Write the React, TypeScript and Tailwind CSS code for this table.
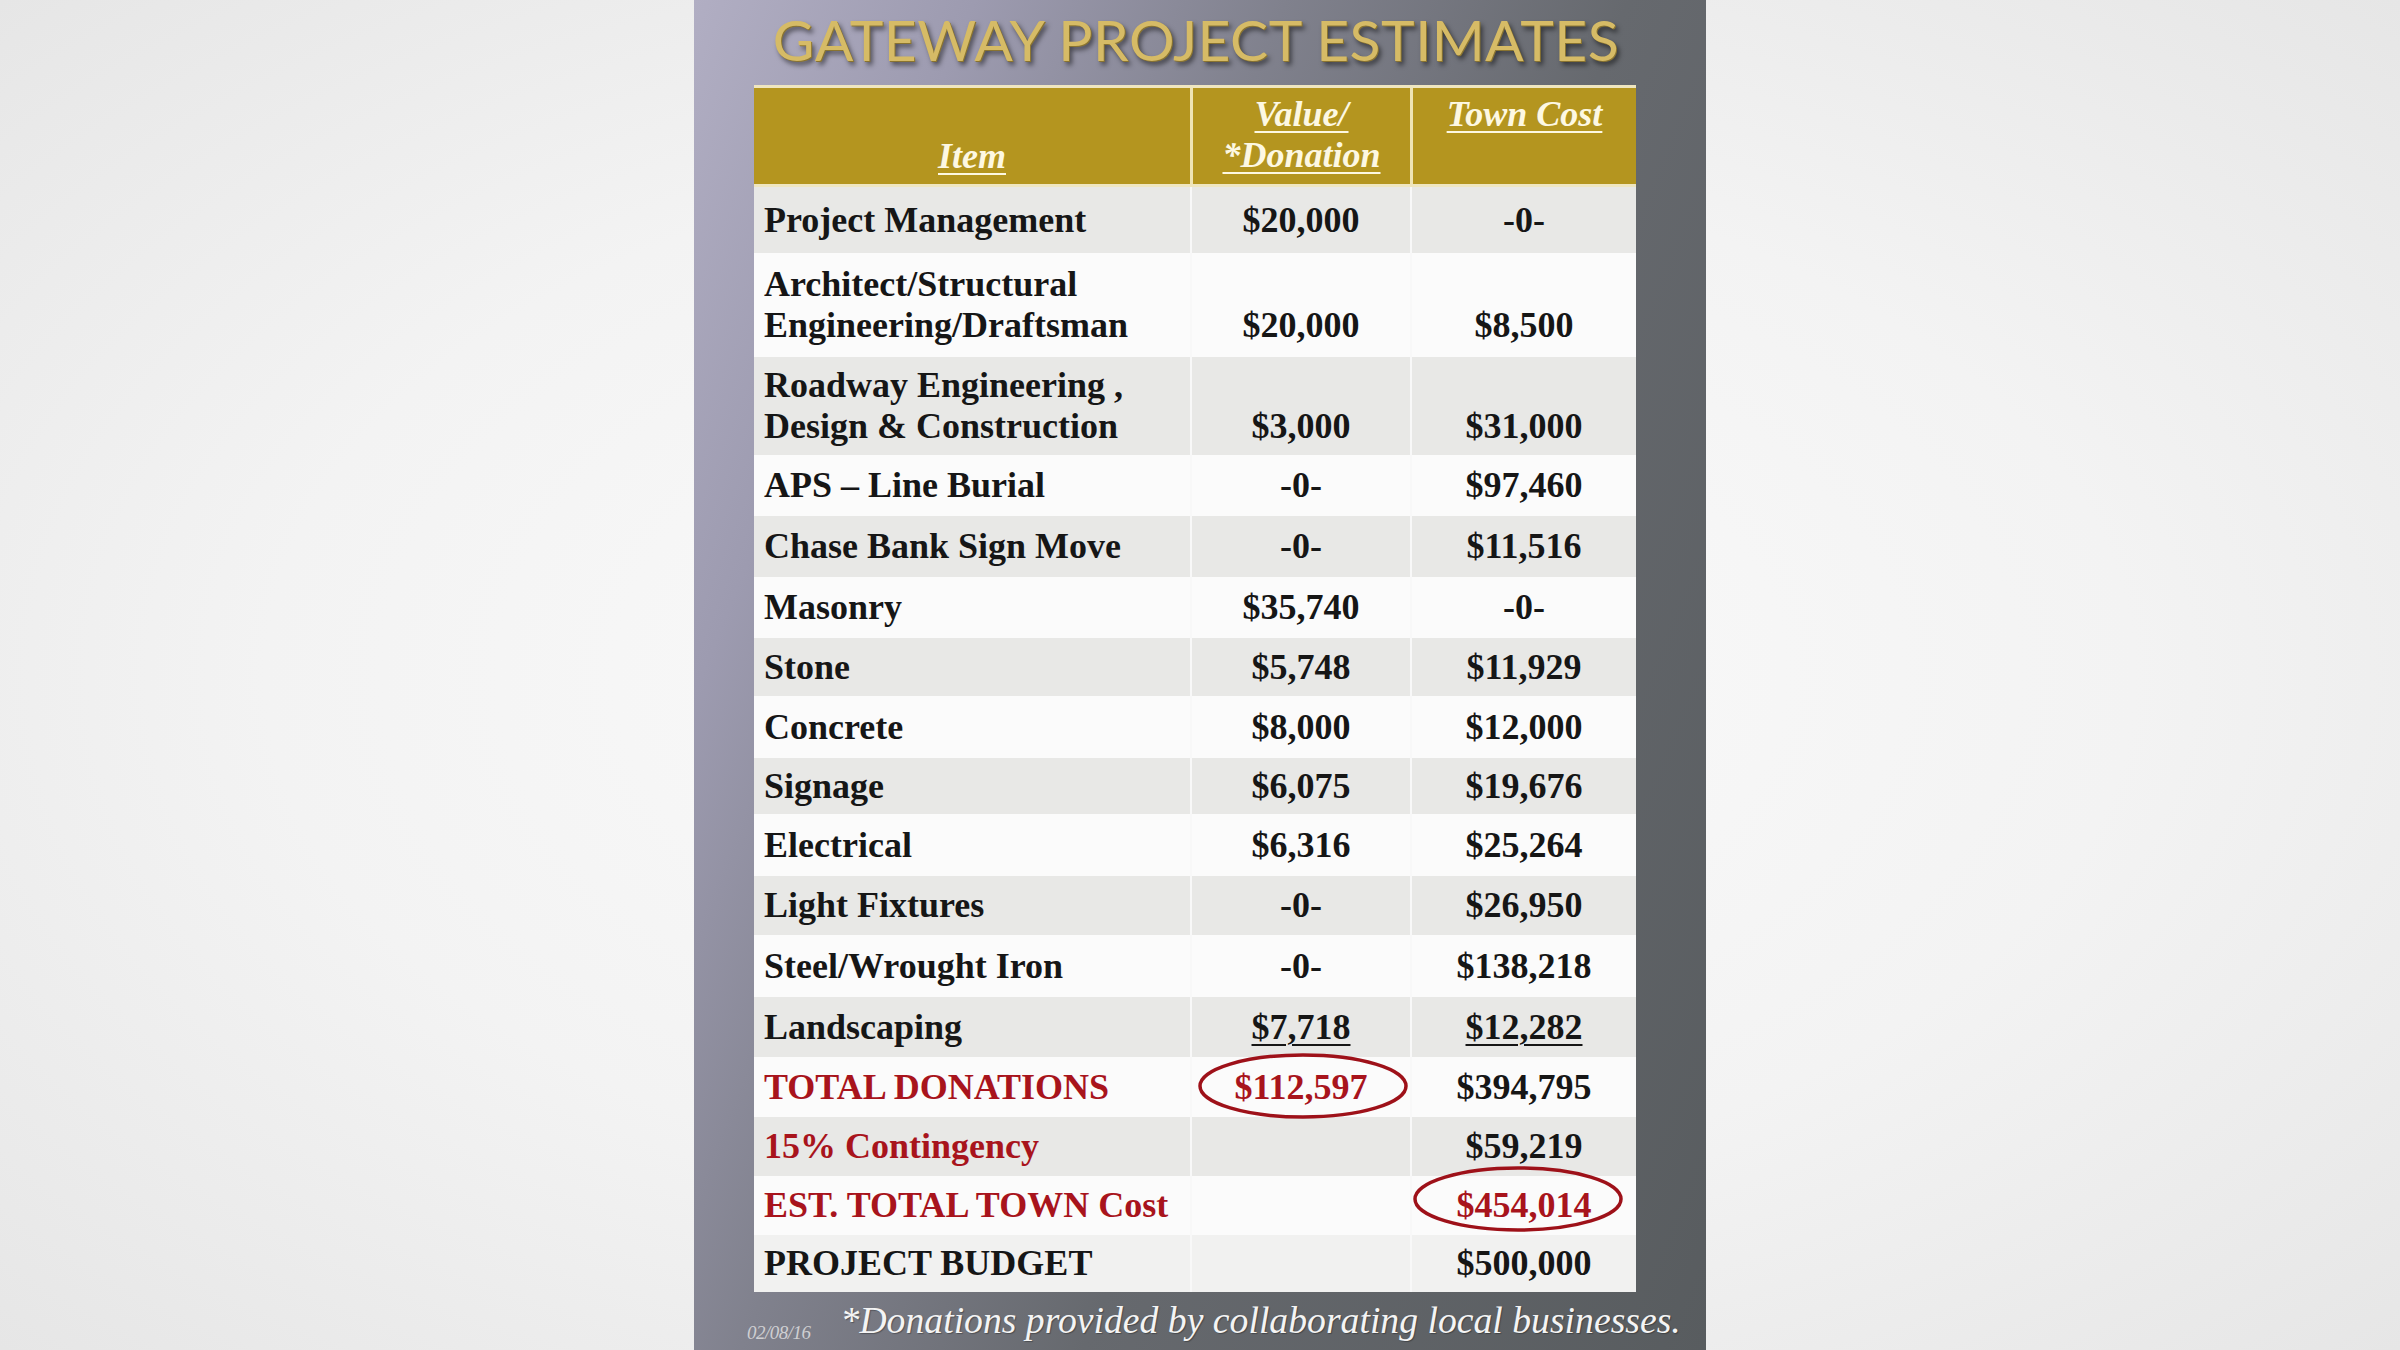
import React from "react";

type Row = {
  item: string[];
  v: string;
  t: string;
  h: string;
  bg: string;
  red?: boolean;
  vRed?: boolean;
  tRed?: boolean;
  vCircle?: boolean;
  tCircle?: boolean;
  underline?: boolean;
};

const rows: Row[] = [
  { item: ["Project Management"], v: "$20,000", t: "-0-", h: "h-[66px]", bg: "bg-[#e8e8e6]" },
  { item: ["Architect/Structural", "Engineering/Draftsman"], v: "$20,000", t: "$8,500", h: "h-[104px]", bg: "bg-[#fbfbfb]" },
  { item: ["Roadway Engineering ,", "Design & Construction"], v: "$3,000", t: "$31,000", h: "h-[98px]", bg: "bg-[#e8e8e6]" },
  { item: ["APS – Line Burial"], v: "-0-", t: "$97,460", h: "h-[61px]", bg: "bg-[#fbfbfb]" },
  { item: ["Chase Bank Sign Move"], v: "-0-", t: "$11,516", h: "h-[61px]", bg: "bg-[#e8e8e6]" },
  { item: ["Masonry"], v: "$35,740", t: "-0-", h: "h-[61px]", bg: "bg-[#fbfbfb]" },
  { item: ["Stone"], v: "$5,748", t: "$11,929", h: "h-[58px]", bg: "bg-[#e8e8e6]" },
  { item: ["Concrete"], v: "$8,000", t: "$12,000", h: "h-[62px]", bg: "bg-[#fbfbfb]" },
  { item: ["Signage"], v: "$6,075", t: "$19,676", h: "h-[56px]", bg: "bg-[#e8e8e6]" },
  { item: ["Electrical"], v: "$6,316", t: "$25,264", h: "h-[62px]", bg: "bg-[#fbfbfb]" },
  { item: ["Light Fixtures"], v: "-0-", t: "$26,950", h: "h-[59px]", bg: "bg-[#e8e8e6]" },
  { item: ["Steel/Wrought Iron"], v: "-0-", t: "$138,218", h: "h-[62px]", bg: "bg-[#fbfbfb]" },
  { item: ["Landscaping"], v: "$7,718", t: "$12,282", h: "h-[60px]", bg: "bg-[#e8e8e6]", underline: true },
  { item: ["TOTAL DONATIONS"], v: "$112,597", t: "$394,795", h: "h-[60px]", bg: "bg-[#fbfbfb]", red: true, vRed: true, vCircle: true },
  { item: ["15% Contingency"], v: "", t: "$59,219", h: "h-[59px]", bg: "bg-[#e8e8e6]", red: true },
  { item: ["EST. TOTAL TOWN Cost"], v: "", t: "$454,014", h: "h-[59px]", bg: "bg-[#fbfbfb]", red: true, tRed: true, tCircle: true },
  { item: ["PROJECT BUDGET"], v: "", t: "$500,000", h: "h-[57px]", bg: "bg-[#f1f1f0]" },
];

function Ellipse({ cls }: { cls: string }) {
  return (
    <svg className={`absolute pointer-events-none ${cls}`} viewBox="0 0 212 68" preserveAspectRatio="none">
      <ellipse cx="106" cy="34" rx="103" ry="31" fill="none" stroke="#9e1119" strokeWidth="3.5" />
    </svg>
  );
}

function NumCell({ lines, text, red, underline, circle, circleCls, width }: { lines: number; text: string; red?: boolean; underline?: boolean; circle?: boolean; circleCls?: string; width: string }) {
  return (
    <div className={`relative ${width} h-full flex flex-col justify-center items-center border-l-2 border-[#f8f8f8] leading-[41px]`}>
      {lines === 2 && <span>&nbsp;</span>}
      <span className={`${red ? "text-[#a8141c]" : "text-[#161616]"} ${underline ? "underline decoration-2 underline-offset-[5px]" : ""}`}>{text || "\u00a0"}</span>
      {circle && <Ellipse cls={circleCls || ""} />}
    </div>
  );
}

export default function App() {
  return (
    <div className="w-[2400px] h-[1350px] flex justify-center bg-[radial-gradient(ellipse_at_center,#fbfbfb_0%,#f3f3f3_55%,#e6e6e6_100%)] overflow-hidden">
      <div className="w-[1012px] h-full flex flex-col bg-[linear-gradient(112deg,#b1aec3_0%,#9d9bb0_18%,#80818d_38%,#66696e_60%,#585c5f_100%)]">
        <div className="h-[85px] flex items-center justify-center pb-[6px] pr-[8px]">
          <span className="font-['Lato',sans-serif] text-[57px] leading-none text-[#d6bb66] tracking-[0.5px] [text-shadow:1px_1px_0_#8a7430,3px_4px_5px_rgba(0,0,0,0.55)]">
            GATEWAY PROJECT ESTIMATES
          </span>
        </div>
        <div className="ml-[60px] w-[882px] flex flex-col font-['Liberation_Serif',serif] font-bold text-[36px]">
          <div className="h-[102px] flex bg-[#b4951f] border-t-[3px] border-b-[3px] border-[#efe6c0] italic text-[#fdf8e2] leading-[41px]">
            <div className="w-[436px] flex flex-col items-center pt-[48px]">
              <span className="underline decoration-2 underline-offset-[5px]">Item</span>
            </div>
            <div className="w-[220px] flex flex-col items-center pt-[6px] border-l-[3px] border-[#efe4b4]">
              <span className="underline decoration-2 underline-offset-[5px]">Value/</span>
              <span className="underline decoration-2 underline-offset-[5px]">*Donation</span>
            </div>
            <div className="w-[226px] flex flex-col items-center pt-[6px] border-l-[3px] border-[#efe4b4]">
              <span className="underline decoration-2 underline-offset-[5px]">Town Cost</span>
            </div>
          </div>
          {rows.map((r, i) => (
            <div key={i} className={`${r.h} ${r.bg} flex`}>
              <div className={`w-[436px] h-full flex flex-col justify-center pl-[10px] leading-[41px] ${r.red ? "text-[#a8141c]" : "text-[#161616]"}`}>
                {r.item.map((l, j) => (
                  <span key={j}>{l}</span>
                ))}
              </div>
              <NumCell width="w-[220px]" lines={r.item.length} text={r.v} red={r.vRed} underline={r.underline} circle={r.vCircle} circleCls="left-[5px] top-[-5px] w-[212px] h-[68px]" />
              <NumCell width="w-[226px]" lines={r.item.length} text={r.t} red={r.tRed} underline={r.underline} circle={r.tCircle} circleCls="left-[0px] top-[-11px] w-[212px] h-[68px]" />
            </div>
          ))}
        </div>
        <div className="flex-1 flex items-center pl-[53px] gap-[30px] font-['Liberation_Serif',serif] italic">
          <span className="text-[19px] text-[#cfcfd2] mt-[24px] tracking-[-0.5px]">02/08/16</span>
          <span className="text-[37.7px] text-[#f4f4f4] leading-none [text-shadow:1px_1px_1px_rgba(0,0,0,0.3)]">*Donations provided by collaborating local businesses.</span>
        </div>
      </div>
    </div>
  );
}
